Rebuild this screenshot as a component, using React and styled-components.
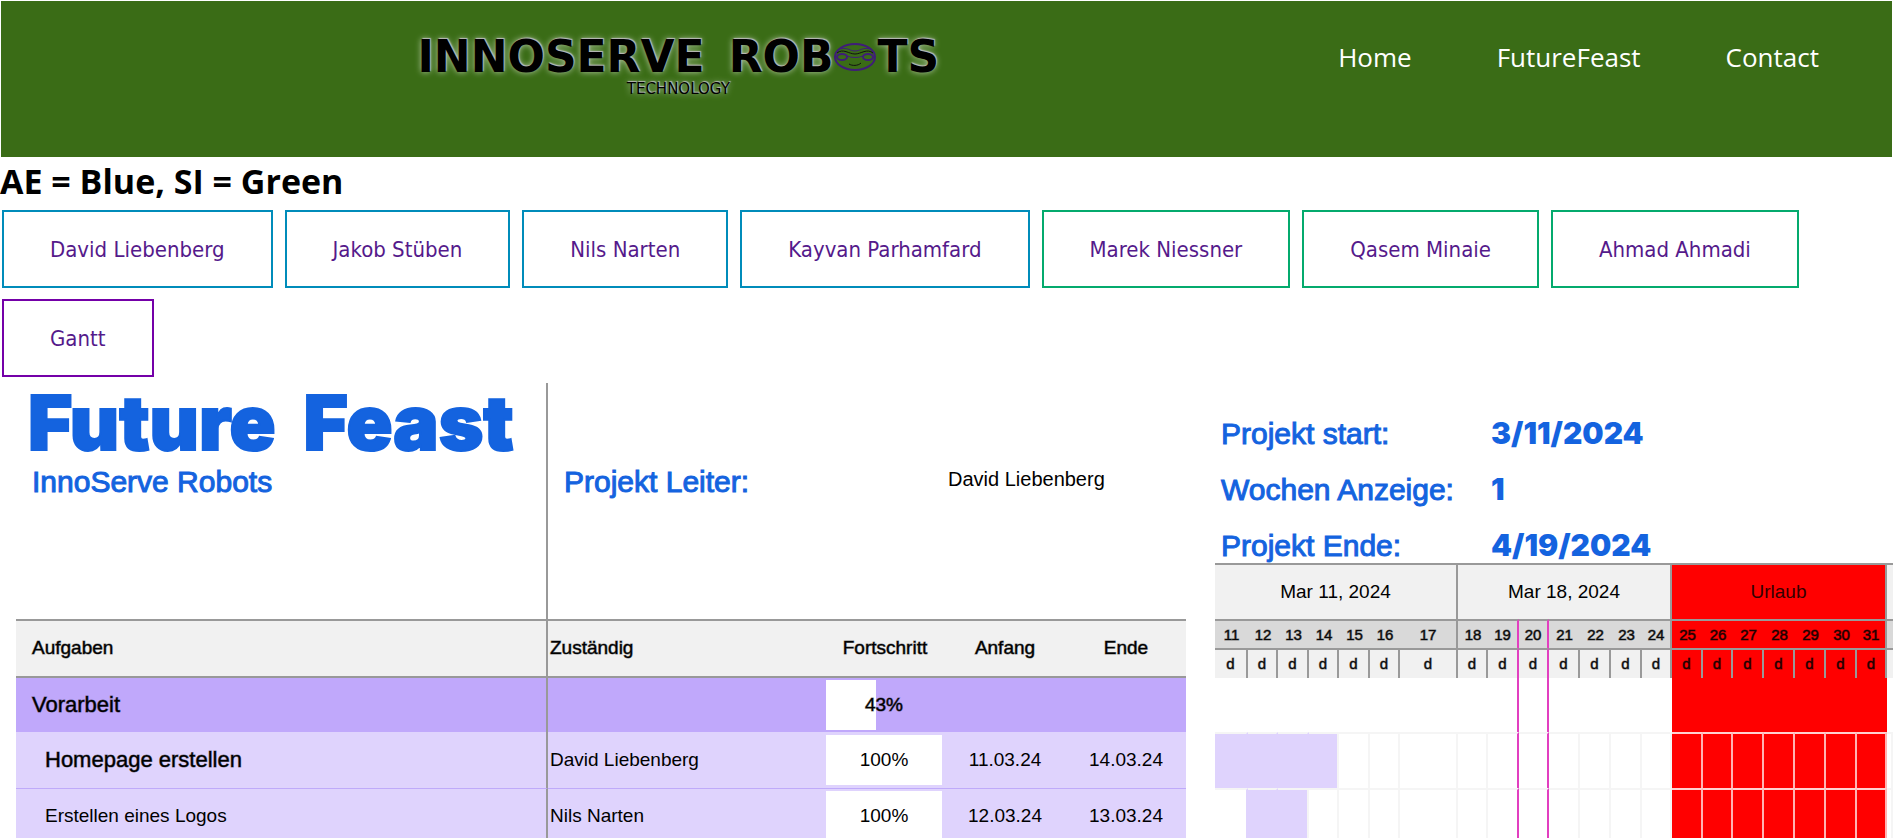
import React from "react";
import styled, { createGlobalStyle } from "styled-components";

const GlobalStyle = createGlobalStyle`
  * { box-sizing: border-box; }
  body { margin: 0; background: #fff; color: #000; font-family: "Open Sans", "Noto Sans", sans-serif; }
`;

const sans = `"Liberation Sans", Arial, sans-serif`;
const blue = "#1463df";
const lilac = "#dfd3fd";
const line = "#999";
const inkStroke = "1px rgba(0, 0, 0, 0.5)";

const Header = styled.header`
  display: flex;
  justify-content: space-between;
  align-items: flex-start;
  min-height: 156px;
  margin: 1px 1px 0;
  padding: 32px 73px 0 22%;
  background: #3a6c16;
`;

const Logo = styled.a`
  display: flex;
  flex-direction: column;
  align-items: center;
  color: #000;
  text-decoration: none;
  text-shadow: 1px -1px 1px #bbb, 0 0 6px #b5c9a5;
  font-family: "DejaVu Sans", sans-serif;
`;

const Wordmark = styled.span`
  display: flex;
  align-items: center;
  font-size: 44px;
  line-height: 48px;
  font-weight: 700;
`;

const WordGap = styled.span`
  width: 24px;
`;

const Tagline = styled.span`
  font-size: 15px;
  line-height: 16px;
`;

const Nav = styled.nav`
  display: flex;
  gap: 85px;
`;

const NavLink = styled.a`
  color: #fff;
  font-size: 26px;
  line-height: 48px;
  text-decoration: none;
`;

const Legend = styled.h1`
  margin: 0;
  font-size: 34px;
  line-height: 48px;
  font-weight: 700;
`;

const MemberBar = styled.nav`
  display: flex;
  flex-wrap: wrap;
  gap: 11px 12px;
  padding: 5px 80px 6px 2px;
`;

const outline = { ae: "#008cba", si: "#04aa6d", chart: "#7400a8" };

const MemberLink = styled.a`
  padding: 22px 46px 20px;
  border: 2px solid ${(p) => outline[p.$kind]};
  color: #551a8b;
  font-family: "DejaVu Sans Condensed", "DejaVu Sans", sans-serif;
  font-size: 22px;
  line-height: 32px;
  text-decoration: none;
`;

const Chart = styled.main`
  display: grid;
  grid-template-columns: 1170fr 678fr;
  column-gap: 29px;
  padding-left: 16px;
  font-family: ${sans};
`;

const Pane = styled.section`
  min-width: 0;
`;

const ProjectHead = styled.div`
  display: grid;
  grid-template-columns: 532fr 638fr;
  height: 236px;
`;

const TitleBlock = styled.div`
  display: flex;
  flex-direction: column;
  gap: 12px;
  padding: 7px 0 0 12px;
  border-right: 2px solid ${line};
  white-space: nowrap;
`;

const Title = styled.h2`
  display: flex;
  gap: 28px;
  margin: 0;
  color: ${blue};
  font-family: Inter, sans-serif;
  font-size: 76px;
  line-height: 64px;
  font-weight: 900;
  -webkit-text-stroke: 2px ${blue};
`;

const Label = styled.span`
  color: ${blue};
  font-size: 30px;
  line-height: 32px;
  -webkit-text-stroke: 1px ${blue};
`;

const Company = styled(Label)`
  padding-left: 4px;
`;

const Leader = styled.div`
  display: grid;
  grid-template-columns: 384fr 238fr;
  align-items: start;
  padding: 83px 0 0 16px;
`;

const LeaderName = styled.span`
  font-size: 20px;
  line-height: 26px;
`;

const Facts = styled.div`
  display: grid;
  grid-template-columns: 270fr 402fr;
  row-gap: 24px;
  align-content: start;
  height: 180px;
  padding: 35px 0 0 6px;
`;

const Value = styled.span`
  color: ${blue};
  font-family: Inter, sans-serif;
  font-size: 30px;
  line-height: 30px;
  font-weight: 900;
`;

const Table = styled.table`
  width: 100%;
  table-layout: fixed;
  border-collapse: separate;
  border-spacing: 0;
  font-size: 19px;
  line-height: 24px;

  th, td { padding: 0; text-align: center; font-weight: 400; }
`;

const TaskHead = styled.tr`
  height: 59px;
  background: #f1f1f1;

  th {
    padding-bottom: 2px;
    border-top: 2px solid ${line};
    border-bottom: 2px solid ${line};
    -webkit-text-stroke: ${inkStroke};
  }
  th:nth-child(-n + 2) { text-align: left; padding-left: 2px; }
  th:first-child { padding-left: 16px; border-right: 2px solid ${line}; }
`;

const TaskRow = styled.tr`
  height: ${(p) => (p.$group ? 54 : p.$last ? 50 : 56)}px;
  background: ${(p) => (p.$group ? "#c0a8fb" : lilac)};

  td {
    vertical-align: ${(p) => (p.$last ? "top" : "middle")};
    padding-top: ${(p) => (p.$last ? 15 : 0)}px;
    border-top: ${(p) => (p.$last ? "1px solid #bfaafa" : "0")};
  }
  td:nth-child(-n + 2) { text-align: left; padding-left: 2px; }
  td:first-child {
    padding-left: ${(p) => (p.$group ? 16 : 29)}px;
    border-right: 2px solid ${line};
    font-size: ${(p) => (p.$strong ? 22 : 19)}px;
    -webkit-text-stroke: ${(p) => (p.$strong ? inkStroke : "0")};
  }
  td:nth-child(3) { padding-top: ${(p) => (p.$last ? 2 : 0)}px; }
`;

const Progress = styled.div`
  height: ${(p) => (p.$last ? 47 : 50)}px;
  margin-right: 2px;
  padding-top: 13px;
  -webkit-text-stroke: ${(p) => (p.$strong ? inkStroke : "0")};
`;

const WeekRow = styled.tr`
  height: 56px;
  background: #f1f1f1;
`;

const WeekCell = styled.th`
  border-top: 2px solid ${line};
  border-right: ${(p) => (p.$open ? "0" : `2px solid ${line}`)};
  background: ${(p) => (p.$off ? "#f00" : "transparent")};
  color: ${(p) => (p.$off ? "#300" : "#000")};
`;

const DayRow = styled.tr`
  height: ${(p) => (p.$letters ? 30 : 29)}px;
  background: ${(p) => (p.$letters ? "#f1f1f1" : "#d9d9d9")};
  font-size: 15px;
  line-height: 20px;
`;

const DayCell = styled.th`
  border-top: 2px solid ${line};
  border-right: ${(p) => (p.$today ? "2px solid #e23fc0" : p.$divider ? `2px solid ${line}` : "0")};
  background: ${(p) => (p.$off ? "#f00" : "transparent")};
  color: ${(p) => (p.$off ? "#300" : "#111")};
  -webkit-text-stroke: ${inkStroke};
`;

const GridRow = styled.tr`
  height: ${(p) => p.$height}px;
`;

const gridLine = (p) => {
  if (p.$today) return "2px solid #e23fc0";
  if (p.$joined) return `2px solid ${lilac}`;
  if (p.$plain) return "0";
  return `2px solid ${p.$off ? "#ffb3b3" : "#f5f5f5"}`;
};

const GridCell = styled.td`
  border-top: ${(p) => (p.$plain ? "0" : `2px solid ${p.$off ? "#ffd0d0" : "#f5f5f5"}`)};
  border-right: ${gridLine};
  background: ${(p) => (p.$off ? "#f00" : p.$filled ? lilac : "transparent")};
`;

const RobotFace = () => (
  <svg width="44" height="30" viewBox="0 0 44 30" fill="none" stroke="#3f1d78" aria-hidden="true">
    <ellipse cx="22" cy="15" rx="20" ry="13" strokeWidth="2" />
    <path d="M4 11 C10 6 16 12 22 12 S34 6 40 11" strokeWidth="1" stroke="#111" />
    <path d="M8 7 C14 5 17 9 22 9 S30 5 36 7" strokeWidth="1" />
    <path d="M14 14 C18 16 26 16 30 14" strokeWidth="1" />
    <ellipse cx="9" cy="15" rx="5" ry="3" strokeWidth="2" />
    <ellipse cx="35" cy="15" rx="5" ry="3" strokeWidth="2" />
    <path d="M16 22 C19 24 25 24 28 21" strokeWidth="1" stroke="#111" />
  </svg>
);

const members = [
  ["David Liebenberg", "ae"],
  ["Jakob Stüben", "ae"],
  ["Nils Narten", "ae"],
  ["Kayvan Parhamfard", "ae"],
  ["Marek Niessner", "si"],
  ["Qasem Minaie", "si"],
  ["Ahmad Ahmadi", "si"],
  ["Gantt", "chart"],
];

const facts = [
  ["Projekt start:", "3/11/2024"],
  ["Wochen Anzeige:", "1"],
  ["Projekt Ende:", "4/19/2024"],
];

const tasks = [
  { name: "Vorarbeit", who: "", done: 43, from: "", to: "", group: true, strong: true },
  { name: "Homepage erstellen", who: "David Liebenberg", done: 100, from: "11.03.24", to: "14.03.24", strong: true },
  { name: "Erstellen eines Logos", who: "Nils Narten", done: 100, from: "12.03.24", to: "13.03.24", last: true },
];

const taskColumns = [532, 278, 118, 122, 120];
const dayColumns = [33, 30, 31, 30, 31, 30, 58, 30, 31, 30, 31, 31, 31, 30, 31, 30, 31, 31, 31, 31, 30, 6];
const days = Array.from({ length: 22 }, (_, i) => (i < 21 ? i + 11 : null));

const isOff = (day) => day !== null && day >= 25;
const isToday = (day) => day === 19 || day === 20;
const endsWeek = (day) => day === 17 || day === 24 || day === 31;

const schedule = [
  { height: 54, plain: true },
  { height: 56, from: 11, to: 14 },
  { height: 50, from: 12, to: 13 },
];

const Columns = ({ widths }) => (
  <colgroup>
    {widths.map((w, i) => (
      <col key={i} width={w} />
    ))}
  </colgroup>
);

export default function App() {
  return (
    <>
      <GlobalStyle />
      <Header>
        <Logo href="#home">
          <Wordmark>
            <span>INNOSERVE</span>
            <WordGap />
            <span>ROB</span>
            <RobotFace />
            <span>TS</span>
          </Wordmark>
          <Tagline>TECHNOLOGY</Tagline>
        </Logo>
        <Nav>
          <NavLink href="#home">Home</NavLink>
          <NavLink href="#futurefeast">FutureFeast</NavLink>
          <NavLink href="#contact">Contact</NavLink>
        </Nav>
      </Header>
      <Legend>AE = Blue, SI = Green</Legend>
      <MemberBar>
        {members.map(([name, kind]) => (
          <MemberLink key={name} href="#member" $kind={kind}>
            {name}
          </MemberLink>
        ))}
      </MemberBar>
      <Chart>
        <Pane>
          <ProjectHead>
            <TitleBlock>
              <Title>
                <span>Future</span>
                <span>Feast</span>
              </Title>
              <Company>InnoServe Robots</Company>
            </TitleBlock>
            <Leader>
              <Label>Projekt Leiter:</Label>
              <LeaderName>David Liebenberg</LeaderName>
            </Leader>
          </ProjectHead>
          <Table>
            <Columns widths={taskColumns} />
            <thead>
              <TaskHead>
                <th>Aufgaben</th>
                <th>Zuständig</th>
                <th>Fortschritt</th>
                <th>Anfang</th>
                <th>Ende</th>
              </TaskHead>
            </thead>
            <tbody>
              {tasks.map((t) => (
                <TaskRow key={t.name} $group={t.group} $strong={t.strong} $last={t.last}>
                  <td>{t.name}</td>
                  <td>{t.who}</td>
                  <td>
                    <Progress
                      $last={t.last}
                      $strong={t.group}
                      style={{ background: `linear-gradient(to right, #fff ${t.done}%, transparent ${t.done}%)` }}
                    >
                      {t.done}%
                    </Progress>
                  </td>
                  <td>{t.from}</td>
                  <td>{t.to}</td>
                </TaskRow>
              ))}
            </tbody>
          </Table>
        </Pane>
        <Pane>
          <Facts>
            {facts.map(([label, value]) => (
              <React.Fragment key={label}>
                <Label>{label}</Label>
                <Value>{value}</Value>
              </React.Fragment>
            ))}
          </Facts>
          <Table>
            <Columns widths={dayColumns} />
            <thead>
              <WeekRow>
                <WeekCell colSpan={7}>Mar 11, 2024</WeekCell>
                <WeekCell colSpan={7}>Mar 18, 2024</WeekCell>
                <WeekCell colSpan={7} $off>Urlaub</WeekCell>
                <WeekCell $open />
              </WeekRow>
              <DayRow>
                {days.map((d, i) => (
                  <DayCell key={i} $off={isOff(d)} $today={isToday(d)} $divider={endsWeek(d)}>{d}</DayCell>
                ))}
              </DayRow>
              <DayRow $letters>
                {days.map((d, i) => (
                  <DayCell key={i} $off={isOff(d)} $today={isToday(d)} $divider={d !== null}>{d && "d"}</DayCell>
                ))}
              </DayRow>
            </thead>
            <tbody>
              {schedule.map((row, r) => (
                <GridRow key={r} $height={row.height}>
                  {days.map((d, i) => (
                    <GridCell
                      key={i}
                      $plain={row.plain}
                      $off={isOff(d)}
                      $today={isToday(d)}
                      $filled={d !== null && d >= row.from && d <= row.to}
                      $joined={d !== null && d + 1 >= row.from && d < row.to}
                    />
                  ))}
                </GridRow>
              ))}
            </tbody>
          </Table>
        </Pane>
      </Chart>
    </>
  );
}
